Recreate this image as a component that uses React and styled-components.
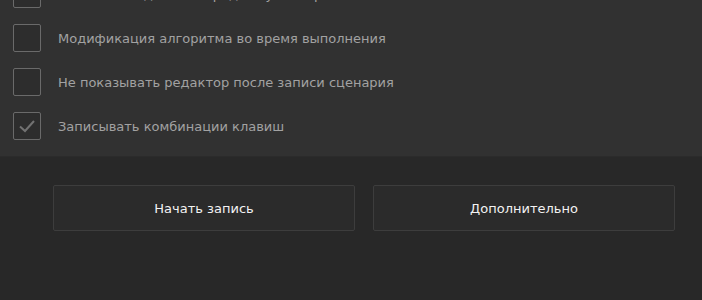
import React, { useState } from 'react';
import styled, { createGlobalStyle } from 'styled-components';

const GlobalStyle = createGlobalStyle`
  html, body {
    margin: 0;
    padding: 0;
    background: #282828;
  }
  body {
    font-family: 'DejaVu Sans', 'Liberation Sans', sans-serif;
  }
`;

const Page = styled.div`
  width: 702px;
  height: 300px;
  display: flex;
  flex-direction: column;
  background: #282828;
  overflow: hidden;
`;

const OptionsPanel = styled.div`
  height: 157px;
  flex-shrink: 0;
  overflow: hidden;
  background: #313131;
  border-bottom: 1px solid #2b2b2b;
  box-sizing: border-box;
`;

const OptionList = styled.div`
  display: flex;
  flex-direction: column;
  gap: 16px;
  margin-top: -20px;
  padding-left: 13px;
`;

const Row = styled.label`
  display: flex;
  align-items: center;
  gap: 17px;
  height: 28px;
  cursor: pointer;
`;

const Box = styled.span`
  width: 28px;
  height: 28px;
  box-sizing: border-box;
  border: 1px solid #6a6a6a;
  border-radius: 2px;
  background: #2d2d2d;
  display: flex;
  align-items: center;
  justify-content: center;
  flex-shrink: 0;
`;

const Caption = styled.span`
  font-size: 13px;
  color: #a2a2a2;
  white-space: nowrap;
`;

const Actions = styled.div`
  display: flex;
  gap: 18px;
  padding: 28px 27px 0 53px;
`;

const ActionButton = styled.button`
  flex: 1;
  height: 46px;
  background: #2b2b2b;
  border: 1px solid #3d3d3d;
  border-radius: 2px;
  color: #f2f2f2;
  font-family: 'DejaVu Sans', 'Liberation Sans', sans-serif;
  font-size: 13px;
  cursor: pointer;
`;

const Check = () => (
  <svg width="18" height="14" viewBox="0 0 18 14">
    <path d="M2 7.5 L7 12 L16 2" fill="none" stroke="#727272" strokeWidth="2" />
  </svg>
);

const initialOptions = [
  { id: 'dialog', label: 'Показывать диалог перед запуском файла', checked: false },
  { id: 'modify', label: 'Модификация алгоритма во время выполнения', checked: false },
  { id: 'editor', label: 'Не показывать редактор после записи сценария', checked: false },
  { id: 'keys', label: 'Записывать комбинации клавиш', checked: true },
];

export default function App() {
  const [options, setOptions] = useState(initialOptions);

  const toggle = (id) =>
    setOptions((list) => list.map((o) => (o.id === id ? { ...o, checked: !o.checked } : o)));

  return (
    <Page>
      <GlobalStyle />
      <OptionsPanel>
        <OptionList>
          {options.map((o) => (
            <Row key={o.id} onClick={() => toggle(o.id)}>
              <Box>{o.checked && <Check />}</Box>
              <Caption>{o.label}</Caption>
            </Row>
          ))}
        </OptionList>
      </OptionsPanel>
      <Actions>
        <ActionButton>Начать запись</ActionButton>
        <ActionButton>Дополнительно</ActionButton>
      </Actions>
    </Page>
  );
}
